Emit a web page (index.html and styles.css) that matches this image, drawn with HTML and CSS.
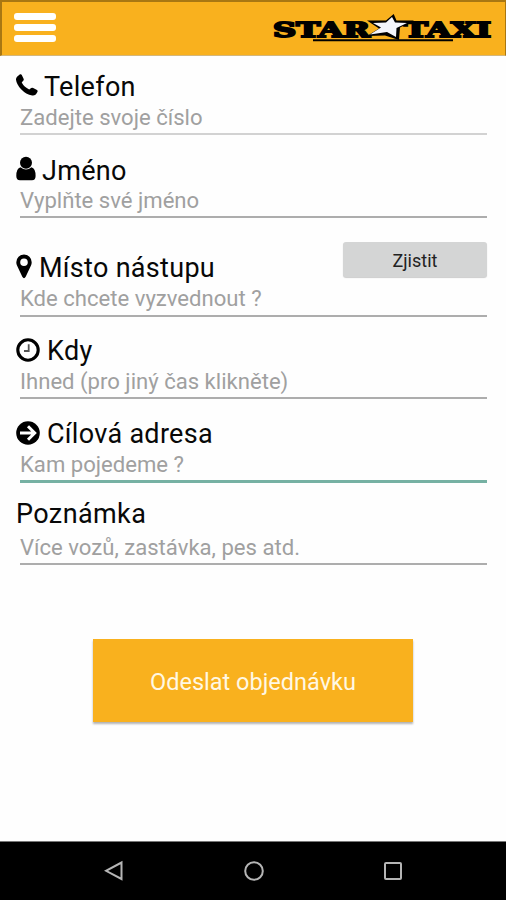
FILE: index.html
```html
<!DOCTYPE html>
<html lang="cs">
<head>
<meta charset="utf-8">
<title>Star Taxi</title>
<link rel="stylesheet" href="styles.css">
</head>
<body>
<header class="bar">
  <div class="menu"><span></span><span></span><span></span></div>
  <svg class="logo" width="222" height="32" viewBox="271 11 222 32">
    <g class="logo-text">
      <text x="273" y="36.5" textLength="97" lengthAdjust="spacingAndGlyphs">STAR</text>
      <text x="404" y="36.5" textLength="87" lengthAdjust="spacingAndGlyphs">TAXI</text>
    </g>
    <path d="M313 40.2H453" stroke="#000" stroke-width="2"/>
    <path d="M393.7 14L396.5 20.5H414L400 27.5L399 40L385 35.5L367 36L379 28.5L367 20.5H386Z" fill="#000"/>
    <path d="M392 17L395 22.5L407 23L396.5 28L396 37L387 32L370 34.5L381 27.5L373 23L386 22.5Z" fill="#f4f5fa"/>
  </svg>
</header>
<main>
  <section class="field phone">
    <label><svg width="22" height="22" viewBox="0 0 22 22"><path d="M1.3 2.6L4 .3Q5.2-.2 5.8 1L7.7 5Q8 6 7.2 6.7L5.7 8.6Q8 13 13.2 15.6L15.2 14Q16.1 13.5 17.2 14L21 16.1Q22 16.8 21.4 17.9Q19.5 22 16.2 21.4Q10 20.5 5.1 15.3Q.6 10.3 0 5.7Q-.2 4.2 1.3 2.6Z"/></svg><span>Telefon</span></label>
    <p>Zadejte svoje číslo</p>
  </section>
  <section class="field name">
    <label><svg width="20" height="25" viewBox="0 0 20 25"><circle cx="10" cy="6.8" r="6"/><path d="M4.5 11.2Q10 16 15.5 11.2Q19.6 12.2 19.6 20Q19.6 24.2 16 24.2H4Q.3 24.2.3 20Q.3 12.2 4.5 11.2Z"/></svg><span>Jméno</span></label>
    <p>Vyplňte své jméno</p>
  </section>
  <section class="field pickup">
    <label><svg width="16" height="25" viewBox="0 0 16 25"><path fill-rule="evenodd" d="M8 .5A7.7 7.7 0 0 0 .3 8.2Q.3 10 1 11.6L6.3 22.8Q8 25.6 9.7 22.8L15 11.6Q15.7 10 15.7 8.2A7.7 7.7 0 0 0 8 .5ZM8 4.4A3.8 3.8 0 1 1 8 12A3.8 3.8 0 1 1 8 4.4Z"/></svg><span>Místo nástupu</span></label>
    <button class="locate">Zjistit</button>
    <p>Kde chcete vyzvednout ?</p>
  </section>
  <section class="field time">
    <label><svg width="24" height="24" viewBox="0 0 24 24"><circle cx="12" cy="12" r="10.2" fill="none" stroke="#000" stroke-width="3.1"/><path d="M12.7 6.2V13H8" fill="none" stroke="#555" stroke-width="1.8"/></svg><span>Kdy</span></label>
    <p>Ihned (pro jiný čas klikněte)</p>
  </section>
  <section class="field target">
    <label><svg width="24" height="24" viewBox="0 0 24 24"><circle cx="12" cy="12" r="11.8"/><path d="M4 12H18M12 5.3L18.7 12L12 18.7" fill="none" stroke="#fff" stroke-width="3"/></svg><span>Cílová adresa</span></label>
    <p>Kam pojedeme ?</p>
  </section>
  <section class="field note">
    <label><span>Poznámka</span></label>
    <p>Více vozů, zastávka, pes atd.</p>
  </section>
  <button class="submit">Odeslat objednávku</button>
</main>
<nav>
  <svg width="20" height="22" viewBox="0 0 20 22"><path d="M17.5 2.5V19L2 10.8Z"/></svg>
  <svg width="22" height="22" viewBox="0 0 22 22"><circle cx="11" cy="11" r="8.8"/></svg>
  <svg width="20" height="22" viewBox="0 0 20 22"><rect x="2" y="3" width="16" height="16" rx="1"/></svg>
</nav>
</body>
</html>
```
FILE: styles.css
```css
* { box-sizing: border-box; }
body {
  margin: 0;
  width: 506px;
  height: 900px;
  display: flex;
  flex-direction: column;
  overflow: hidden;
  background: #fefefe;
  color: #080808;
  font-family: Roboto, "Liberation Sans", sans-serif;
}
.bar {
  height: 56px;
  flex: none;
  display: flex;
  justify-content: space-between;
  align-items: flex-start;
  padding: 9px 12px 0 12px;
  background: #f9b11e;
  border: solid #a97712;
  border-width: 2px 1px 0 2px;
  border-bottom: 1px solid #d3b77d;
}
.menu { display: grid; gap: 4px; padding-top: 2px; }
.menu span { width: 42px; height: 7px; border-radius: 3px; background: #fff; }
.logo-text {
  font: bold 19.5px "DejaVu Serif", serif;
  stroke: #000;
  stroke-width: 1.8;
}
main { flex: 1; display: flex; flex-direction: column; }
.field {
  flex: none;
  display: grid;
  grid-template: 32px 30px / 1fr 144px;
  align-content: end;
  margin: 0 19px 0 16px;
}
.field::after {
  content: "";
  grid-column: 1 / -1;
  height: 2px;
  margin-left: 4px;
  background: #adadad;
}
.field label {
  display: flex;
  font-size: 27px;
  line-height: 32px;
  letter-spacing: .3px;
  white-space: nowrap;
}
.field label svg { flex: none; }
.field p {
  grid-column: 1 / -1;
  margin: 0 0 0 4px;
  font-size: 22.1px;
  line-height: 28px;
  color: #a0a0a0;
  white-space: nowrap;
}
.phone { height: 79px; }
.phone::after { background: #d2d2d2; }
.phone svg { margin: 3px 6px 0 0; }
.name { height: 83px; grid-template-rows: 31px 30px; }
.name svg { margin: 1px 6px 0 0; }
.pickup { height: 99px; grid-template-rows: 32px 31px; }
.pickup svg { margin: 2px 7px 0 0; }
.time { height: 82px; }
.time svg { margin: 3px 7px 0 0; }
.target { height: 84px; }
.target svg { margin: 3px 7px 0 0; }
.target::after { height: 3px; background: #76b1a3; }
.note { height: 82px; grid-template-rows: 35px 30px; }
.note label { letter-spacing: .4px; }
button { border: 0; padding: 0; font-family: inherit; }
.locate {
  height: 35px;
  margin-top: -10px;
  border-radius: 3px;
  background: #d4d5d5;
  box-shadow: 0 1px 1px #ccc;
  color: #222;
  font-size: 18px;
  padding-top: 2px;
}
.submit {
  width: 320px;
  height: 83px;
  margin: 74px 0 0 93px;
  background: #f9b11e;
  color: #fff8e4;
  font-size: 23.5px;
  line-height: 83px;
  padding-top: 2px;
  box-shadow: 0 2px 2px rgba(0, 0, 0, .3);
}
nav {
  height: 59px;
  flex: none;
  display: flex;
  justify-content: space-between;
  padding: 18px 103px 0 104px;
  background: #000;
  border-top: 1px solid #777;
}
nav svg { fill: none; stroke: #b5b5b5; stroke-width: 2; }
```
